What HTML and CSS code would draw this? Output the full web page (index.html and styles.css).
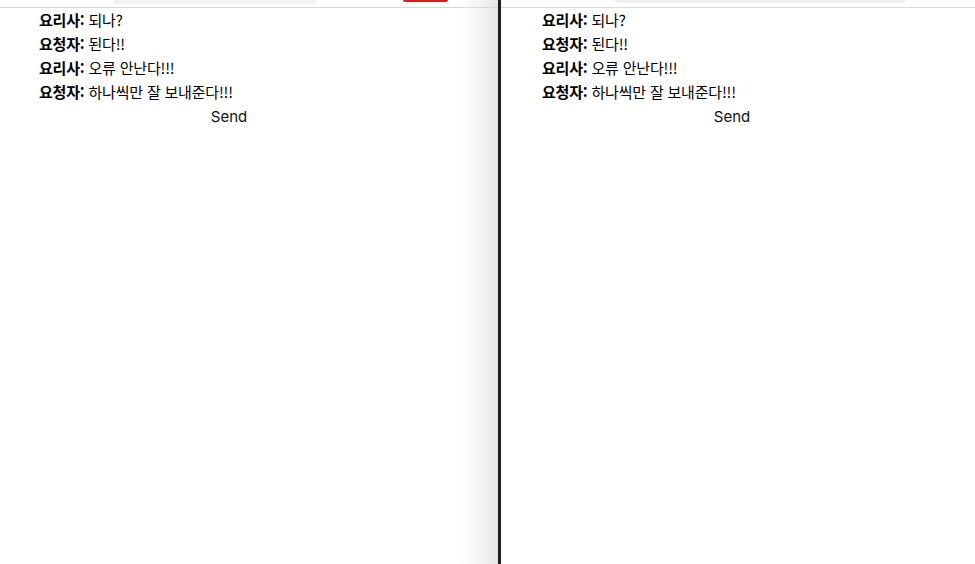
FILE: index.html
```
<!DOCTYPE html>
<html lang="ko">
<head>
    <meta charset="UTF-8">
    <meta name="viewport" content="width=device-width, initial-scale=1.0">
    <title>Chat</title>
    <link rel="stylesheet" href="styles.css">
</head>
<body>

<div class="screen">
    <div class="pane pane-left">
        <div class="topbar">
            <div class="address"></div>
            <div class="record"></div>
        </div>
        <div class="chat">
            <div class="messages">
                <p><b>요리사:</b> 되나?</p>
                <p><b>요청자:</b> 된다!!</p>
                <p><b>요리사:</b> 오류 안난다!!!</p>
                <p><b>요청자:</b> 하나씩만 잘 보내준다!!!</p>
            </div>
            <button class="send-btn">Send</button>
        </div>
    </div>

    <div class="divider"></div>

    <div class="pane pane-right">
        <div class="topbar">
            <div class="address"></div>
        </div>
        <div class="chat">
            <div class="messages">
                <p><b>요리사:</b> 되나?</p>
                <p><b>요청자:</b> 된다!!</p>
                <p><b>요리사:</b> 오류 안난다!!!</p>
                <p><b>요청자:</b> 하나씩만 잘 보내준다!!!</p>
            </div>
            <button class="send-btn">Send</button>
        </div>
    </div>
</div>

</body>
</html>
```

FILE: styles.css
```
body {
    margin: 0;
    padding: 0;
    background: #fff;
    color: #000;
    font-family: "Noto Sans CJK KR", "Noto Sans", sans-serif;
    overflow: hidden;
}
.screen {
    display: flex;
    height: 564px;
}
.pane {
    background: #fff;
}
.pane-left {
    width: 498px;
    background: linear-gradient(to right, #fff 0, #fff 458px, #f5f5f5 480px, #e6e6e6 498px);
}
.pane-right {
    flex: 1;
}
.divider {
    width: 3px;
    background: #1f1f1f;
}
.topbar {
    display: flex;
    align-items: flex-start;
    height: 7px;
    border-bottom: 1px solid #dcdcdc;
}
.pane-left .topbar {
    border-bottom-color: #d8d8d8;
}
.address {
    height: 4px;
    background: #f0f1f3;
    border-radius: 0 0 10px 10px;
}
.pane-left .address {
    width: 204px;
    margin-left: 113px;
}
.pane-right .address {
    width: 290px;
    margin-left: 114px;
    height: 3px;
}
.record {
    width: 45px;
    height: 2px;
    margin-left: 86px;
    background: #d0211c;
    border-radius: 0 0 4px 4px;
}
.chat {
    width: 380px;
    display: flex;
    flex-direction: column;
}
.pane-left .chat {
    margin-left: 39px;
}
.pane-right .chat {
    margin-left: 41px;
}
.messages p {
    margin: 0;
    font-size: 15px;
    line-height: 24px;
    letter-spacing: -0.2px;
}
.messages b {
    font-weight: 700;
}
.send-btn {
    align-self: center;
    margin-top: 3px;
    background: none;
    border: none;
    padding: 0;
    font-family: Inter, "Noto Sans", sans-serif;
    font-size: 15px;
    color: #111;
    line-height: 20px;
    cursor: pointer;
}
```
